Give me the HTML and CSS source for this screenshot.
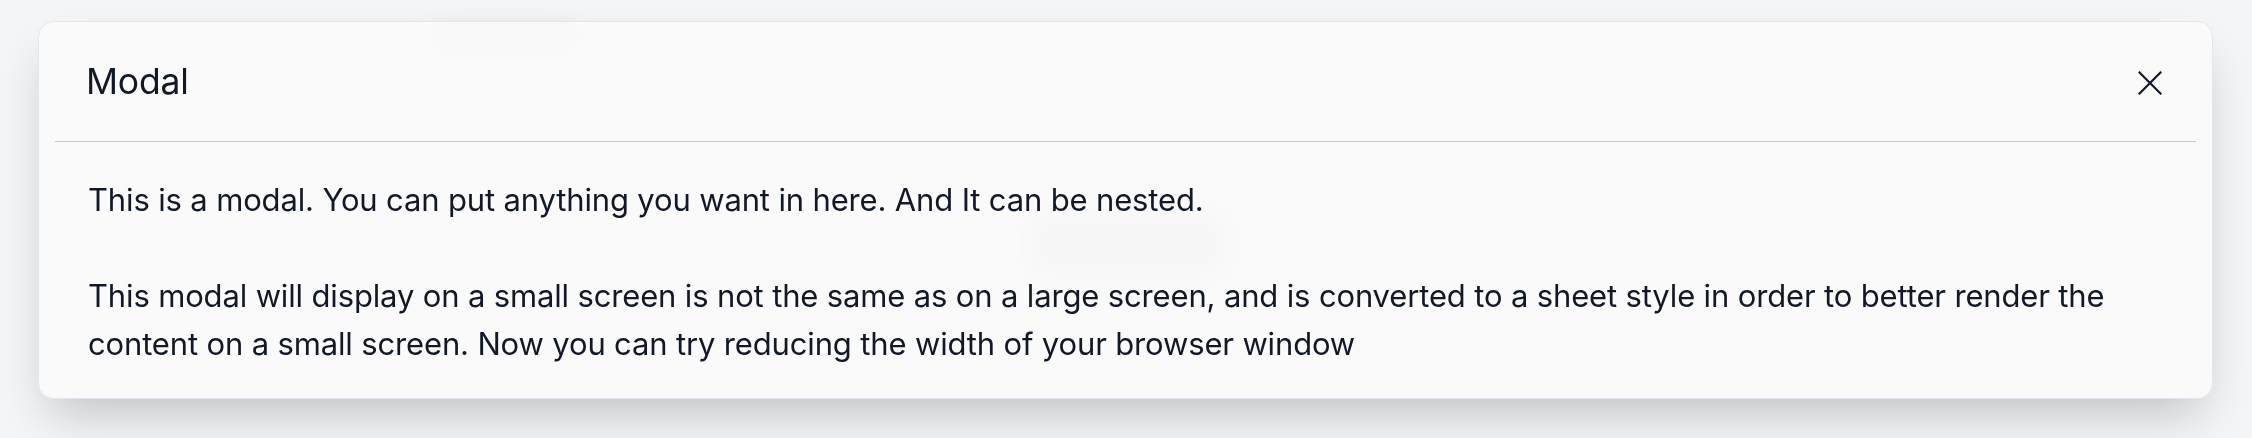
FILE: index.html
```html
<!DOCTYPE html>
<html lang="en">
<head>
<meta charset="utf-8">
<title>Modal</title>
<link rel="stylesheet" href="styles.css">
</head>
<body>
<div class="stage">
  <div class="backdrop-blob blob-top"></div>
  <div class="backdrop-blob blob-button"></div>
  <section class="modal">
    <header class="modal-header">
      <h2 class="modal-title">Modal</h2>
      <button class="close-btn" aria-label="Close">
        <svg width="24" height="24" viewBox="0 0 24 24" fill="none" stroke="#111827" stroke-width="2.2" stroke-linecap="square">
          <path d="M1.5 1.5 L22.5 22.5 M22.5 1.5 L1.5 22.5"/>
        </svg>
      </button>
    </header>
    <div class="modal-body">
      <p>This is a modal. You can put anything you want in here. And It can be nested.</p>
      <p class="spaced">This modal will display on a small screen is not the same as on a large screen, and is converted to a sheet style in order to better render the content on a small screen. Now you can try reducing the width of your browser window</p>
    </div>
  </section>
</div>
</body>
</html>
```
FILE: styles.css
```css
html, body {
  margin: 0;
  padding: 0;
}
body {
  background: #f4f5f7;
  font-family: Inter, "Noto Sans", sans-serif;
  color: #111827;
  height: 438px;
  overflow: hidden;
}
.stage {
  position: relative;
  padding: 21px 39px 0 38px;
}
.modal {
  position: relative;
  z-index: 1;
  background: rgba(250, 250, 251, 0.88);
  border: 1px solid #e2e6ee;
  border-radius: 16px;
  box-shadow: 0 25px 50px -12px rgba(0, 0, 0, 0.22);
  backdrop-filter: blur(6px);
}
.modal-header {
  margin: 0 16px;
  height: 119px;
  border-bottom: 1px solid #c6c6c8;
  display: flex;
  align-items: center;
  justify-content: space-between;
  padding: 0 34px 0 31px;
}
.modal-title {
  margin: 0;
  font-size: 35.5px;
  font-weight: 400;
  letter-spacing: -0.2px;
  color: #111827;
}
.close-btn {
  border: 0;
  background: transparent;
  padding: 0;
  margin-top: 2px;
  display: flex;
  width: 24px;
  height: 24px;
  cursor: pointer;
}
.modal-body {
  padding: 34px 48px 30px 49px;
  font-size: 31px;
  letter-spacing: -0.15px;
  line-height: 48px;
  color: #111827;
}
.modal-body p {
  margin: 0;
}
.modal-body p.spaced {
  margin-top: 48px;
}
.backdrop-blob {
  position: absolute;
  background: #d8d8da;
  filter: blur(10px);
  border-radius: 14px;
  z-index: 0;
}
.blob-top {
  left: 430px;
  top: 24px;
  width: 150px;
  height: 26px;
  background: #e6e6e8;
}
.blob-button {
  left: 1030px;
  top: 212px;
  width: 195px;
  height: 64px;
}
```
